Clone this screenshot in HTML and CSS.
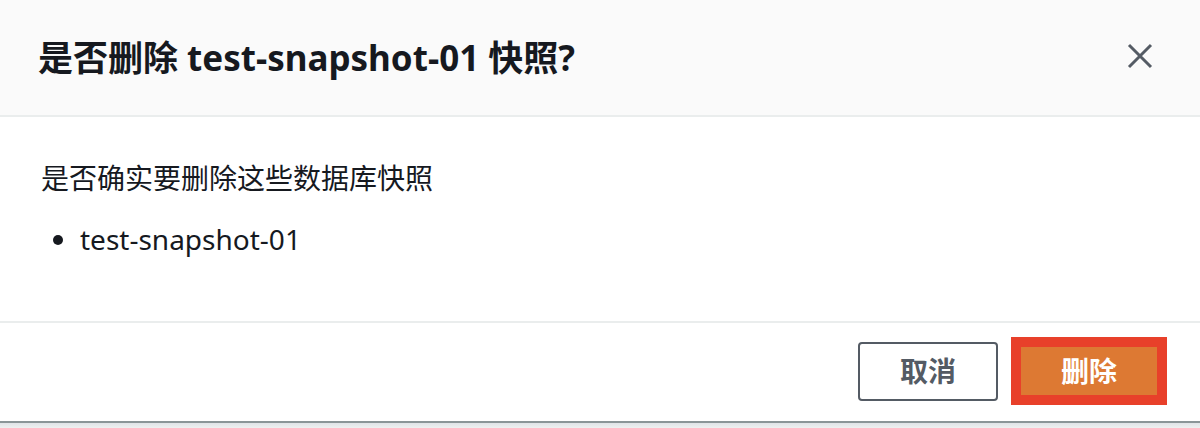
FILE: index.html
```html
<!DOCTYPE html>
<html lang="zh-CN">
<head>
<meta charset="utf-8">
<link rel="stylesheet" href="styles.css">
</head>
<body>
<div class="modal">
  <div class="modal-header">
    <h2 class="title">是否删除 test-snapshot-01 快照?</h2>
    <button class="close" aria-label="关闭">
      <svg width="26" height="26" viewBox="0 0 26 26"><path d="M2 2 L24 24 M24 2 L2 24" stroke="#545b64" stroke-width="3" fill="none"/></svg>
    </button>
  </div>
  <div class="modal-body">
    <p class="question">是否确实要删除这些数据库快照</p>
    <ul class="items">
      <li>test-snapshot-01</li>
    </ul>
  </div>
  <div class="modal-footer">
    <button class="btn btn-cancel">取消</button>
    <span class="highlight"><button class="btn btn-delete">删除</button></span>
  </div>
</div>
<div class="backdrop"></div>
</body>
</html>
```
FILE: styles.css
```css
* { box-sizing: border-box; }
html, body { margin: 0; padding: 0; }
body {
  width: 1200px;
  height: 428px;
  overflow: hidden;
  background: #eef0f0;
  font-family: "Noto Sans", "Noto Sans CJK SC", sans-serif;
  color: #16191f;
}
.modal {
  height: 423px;
  background: #fff;
  display: flex;
  flex-direction: column;
  border-bottom: 2px solid #8a9597;
}
.modal-header {
  height: 117px;
  background: #fafafa;
  border-bottom: 2px solid #eaeded;
  display: flex;
  align-items: center;
  justify-content: space-between;
  padding: 0 47px 0 38px;
  flex-shrink: 0;
}
.title {
  margin: 0;
  font-size: 35px;
  font-weight: 700;
  line-height: 44px;
  color: #16191f;
}
.close {
  border: 0;
  background: none;
  padding: 0;
  width: 26px;
  height: 26px;
  display: flex;
  margin-top: -4px;
}
.modal-body {
  flex: 1;
  padding: 43px 40px 0 41px;
}
.question {
  margin: 0;
  font-size: 28px;
  line-height: 36px;
}
.items {
  margin: 25px 0 0 0;
  padding: 0 0 0 39px;
  font-size: 28px;
  line-height: 36px;
}
.modal-footer {
  height: 100px;
  border-top: 2px solid #eaeded;
  display: flex;
  align-items: center;
  justify-content: flex-end;
  gap: 13px;
  padding: 0 33px 2px 0;
  flex-shrink: 0;
}
.btn {
  font-family: inherit;
  font-size: 28px;
  font-weight: 700;
  line-height: 1;
  cursor: pointer;
}
.btn-cancel {
  width: 140px;
  height: 59px;
  border: 2px solid #545b64;
  border-radius: 4px;
  background: #fff;
  color: #545b64;
}
.highlight {
  display: flex;
  border: 10px solid #e8402a;
}
.btn-delete {
  width: 136px;
  height: 48px;
  border: 0;
  background: #dd7933;
  color: #fff;
}
.backdrop {
  height: 5px;
  background: linear-gradient(#dfe4e7, #eef0f0);
}
```
